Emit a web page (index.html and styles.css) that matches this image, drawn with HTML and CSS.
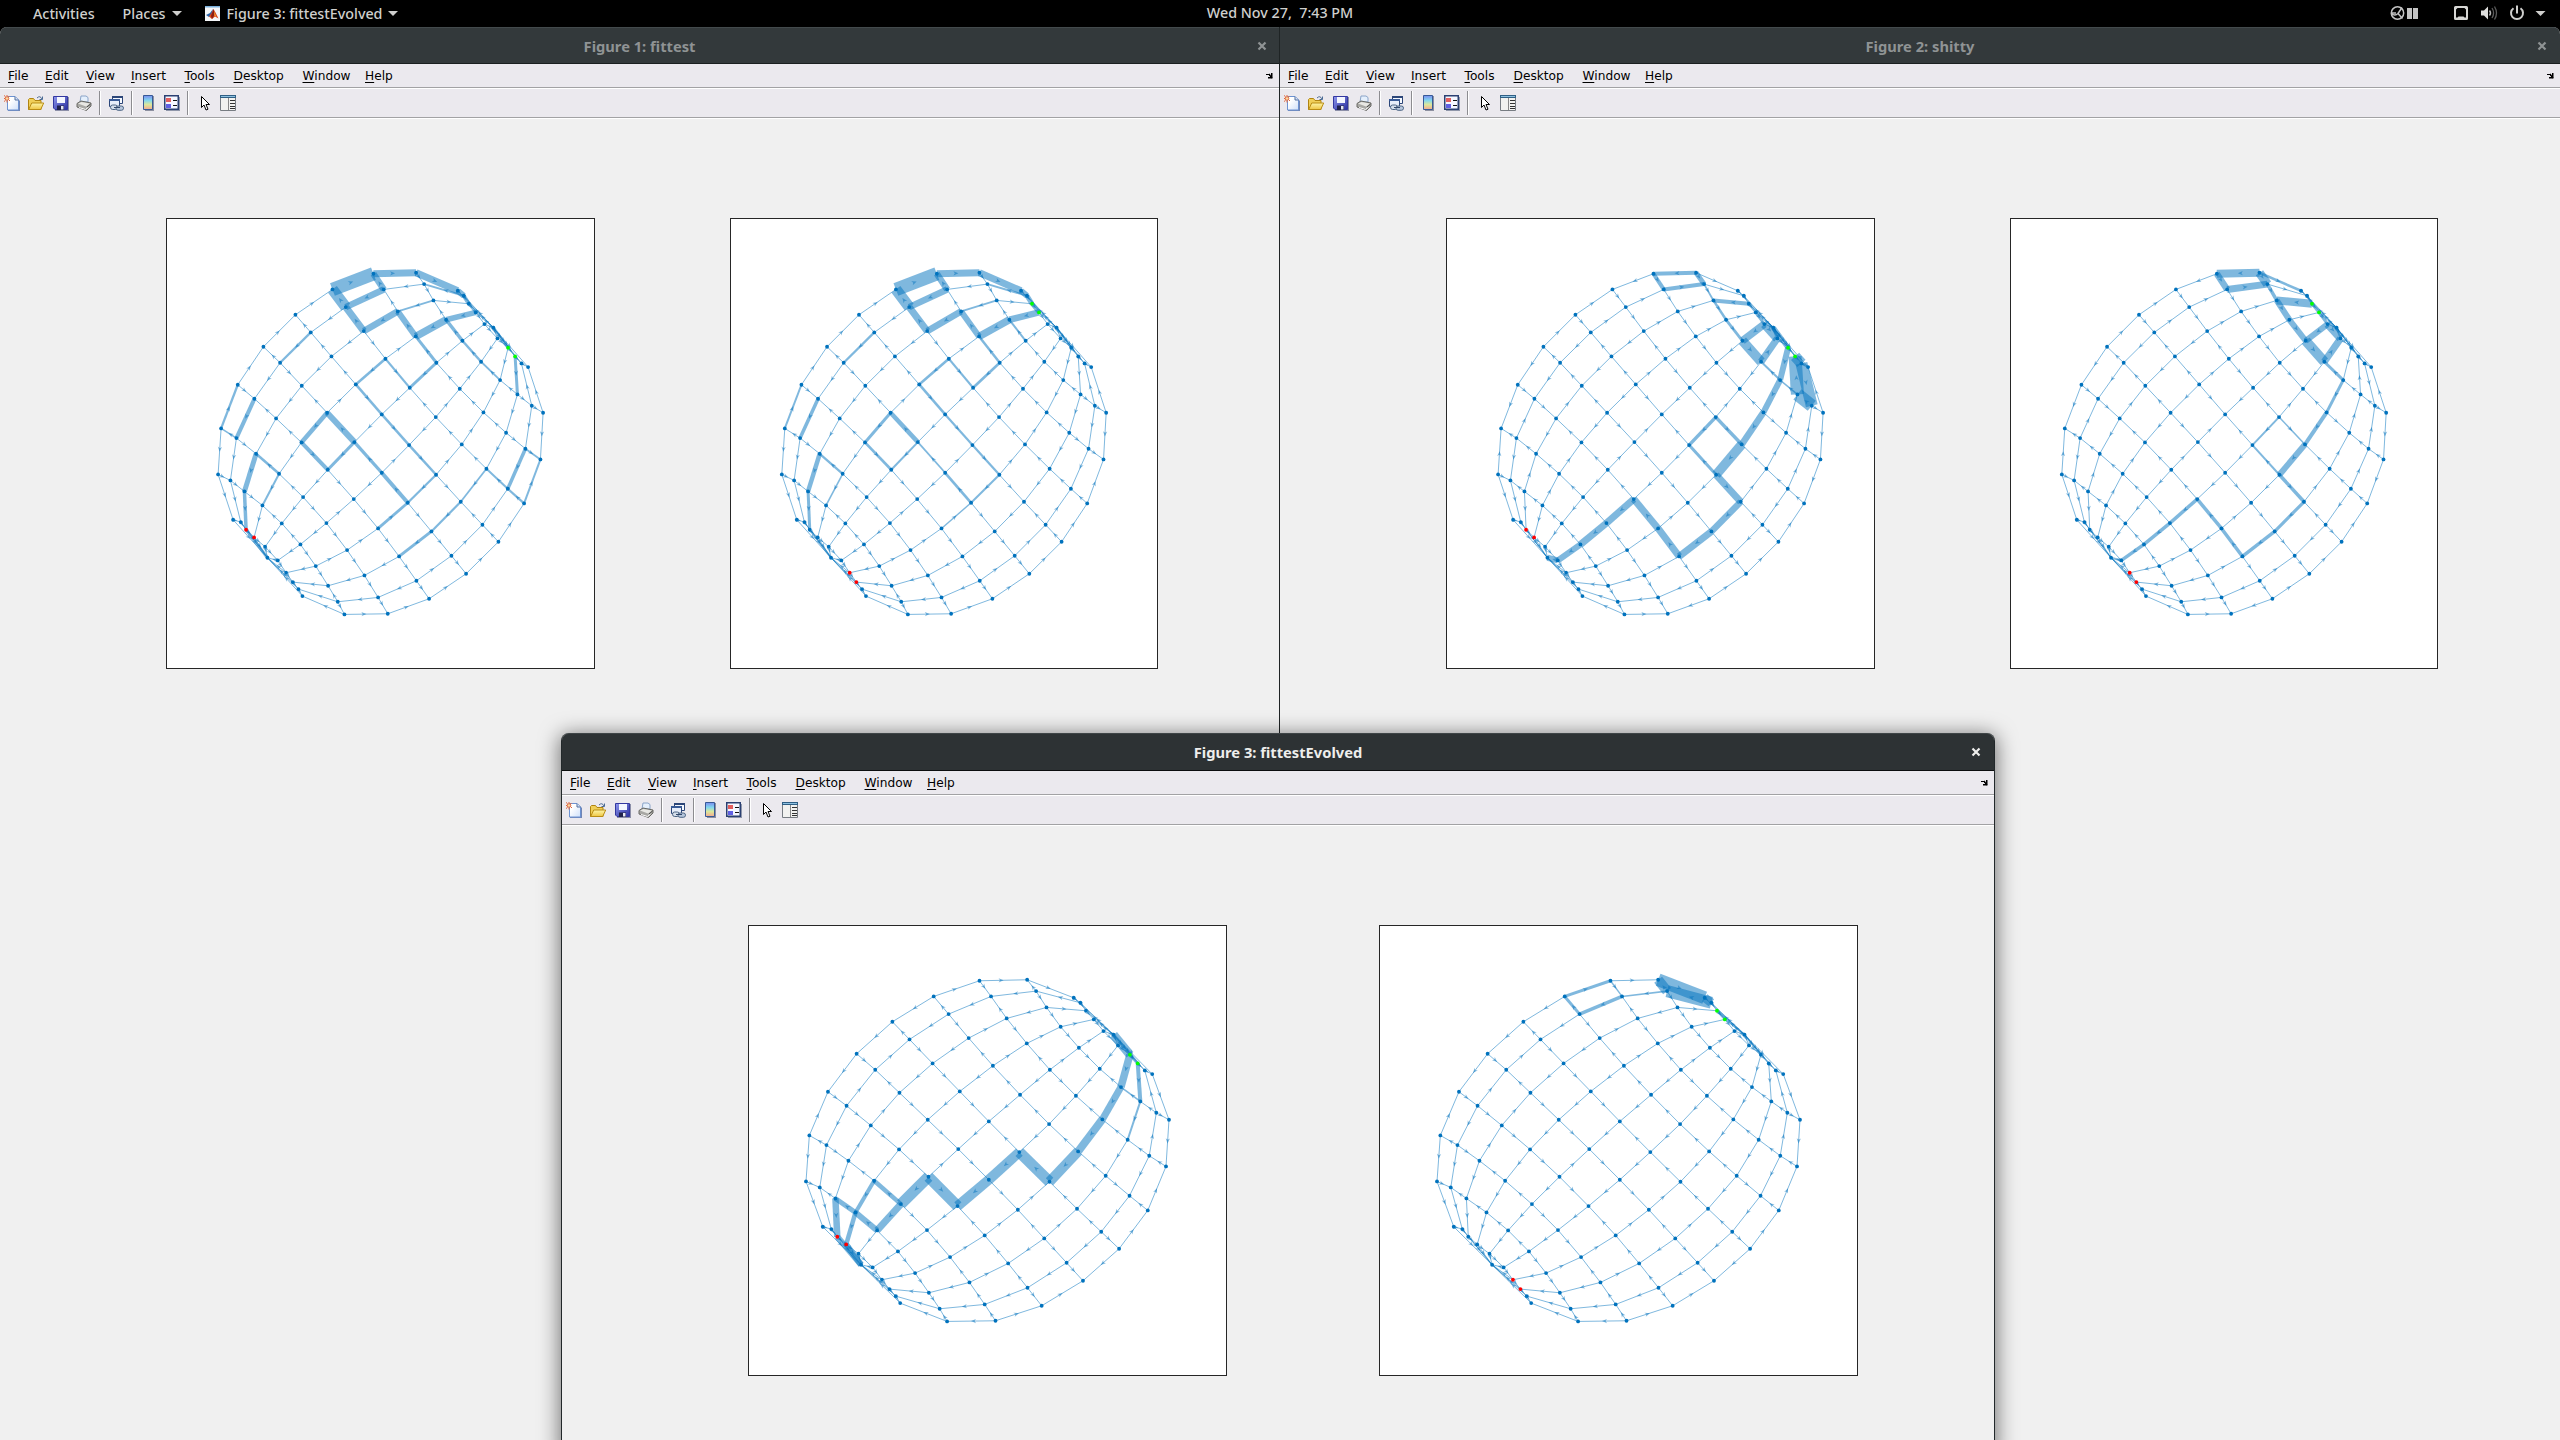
FILE: index.html
```html
<!DOCTYPE html>
<html lang="en">
<head>
<meta charset="utf-8">
<title>Figure 3: fittestEvolved</title>
<link rel="stylesheet" href="styles.css">
</head>
<body>
<svg class="defs" aria-hidden="true">
  <defs>
    <linearGradient id="g-page" x1="0" y1="0" x2="1" y2="1"><stop offset="0.3" stop-color="#fff"/><stop offset="1" stop-color="#cfe0fa"/></linearGradient>
    <linearGradient id="g-bar" x1="0" y1="0" x2="0" y2="1"><stop offset="0" stop-color="#7a8cf0"/><stop offset="0.35" stop-color="#82d8ee"/><stop offset="0.65" stop-color="#dce89a"/><stop offset="1" stop-color="#f2a890"/></linearGradient>
    <linearGradient id="g-disk" x1="0" y1="0" x2="1" y2="1"><stop offset="0" stop-color="#8f98ee"/><stop offset="1" stop-color="#2a2fa0"/></linearGradient>
    <linearGradient id="g-fold" x1="0" y1="0" x2="0" y2="1"><stop offset="0" stop-color="#fdf6a8"/><stop offset="1" stop-color="#eec544"/></linearGradient>
  </defs>
  <symbol id="i-new" viewBox="0 0 16 16">
    <path d="M4 2h8l4 4v10H4z" fill="#7286b4"/><path d="M3.500 1.500h7.500l3.500 3.500v10h-11z" fill="url(#g-page)" stroke="#6c92d2"/>
    <path d="M11 1.500v3.500h3.500" fill="#d5e2f7" stroke="#54719f"/>
    <path d="M0 .5l1.500 1M5.500 1l-1 1M0 6.500l1.500-1M3 6v1.500M3 0v1M0 3.500h1M5 5l1 1" stroke="#e0663c"/><circle cx="3" cy="3.500" r="1.800" fill="#fbd9a4" stroke="#e0663c"/>
  </symbol>
  <symbol id="i-open" viewBox="0 0 16 16">
    <path d="M9 3q3-3 5 1M14.500 1.500v3h-3" fill="none" stroke="#4c6c96"/>
    <path d="M.5 14.500v-10l1-1h4l1.500 2h6v9z" fill="#f0cf58" stroke="#b08412"/>
    <path d="M.7 14.500l3-6.500h12l-3 6.500z" fill="url(#g-fold)" stroke="#b98c14"/>
  </symbol>
  <symbol id="i-save" viewBox="0 0 16 16">
    <path d="M2 2h14v14H2z" fill="#8c8fa8"/><path d="M.5 1.500h14v13H2l-1.500-1.500z" fill="url(#g-disk)" stroke="#3338a0"/>
    <path d="M4 2h8v6H4z" fill="#f3f6ff"/><path d="M4 10.500h7V15H4z" fill="#20224c"/><path d="M8 11h2.500v3.500H8z" fill="#e6e8f4"/>
  </symbol>
  <symbol id="i-print" viewBox="0 0 16 16">
    <path d="M4 7l1-6h5l2 1.500L12 7z" fill="#e4effc" stroke="#8aa4c8"/>
    <path d="M1 8.500l4-2.500 10 2v3l-4.500 4.500-9.500-3.500z" fill="#a8a8a4" stroke="#6a6a66"/>
    <path d="M2 8.500l3.500-1.500 8.500 1.500-4 3z" fill="#e8e8e4"/><path d="M3 12.500l6.500 2 3-2.500" fill="none" stroke="#fff"/><path d="M11 12l3.500-3" stroke="#484846"/>
  </symbol>
  <symbol id="i-link" viewBox="0 0 16 16">
    <path d="M4.500 1.500h10v7h-10z" fill="#f6f9ff" stroke="#2c4678"/><path d="M4 1h11v2H4z" fill="#2c4678"/>
    <path d="M1.500 4.500h10v7h-10z" fill="#e6edfa" stroke="#2c4678"/><path d="M1 4h11v2H1z" fill="#385a96"/>
    <rect x="2.500" y="10" width="7" height="4.500" rx="2.200" fill="#d4deeb" stroke="#4c6484"/><rect x="8" y="11" width="7.500" height="4.300" rx="2.100" fill="#b6c6dc" stroke="#4c6484"/><path d="M6 12.500h6" stroke="#32486c"/>
  </symbol>
  <symbol id="i-colorbar" viewBox="0 0 16 16">
    <path d="M4 1h9v15H4z" fill="#8d90a0"/><path d="M2.500.5h9v14h-9z" fill="url(#g-bar)" stroke="#385a96"/>
  </symbol>
  <symbol id="i-legend" viewBox="0 0 16 16">
    <path d="M2 2h14v14H2z" fill="#8f96aa"/><path d="M.75.75h13.500v13.500H.75z" fill="#f5f7ff" stroke="#2b4072" stroke-width="1.500"/>
    <path d="M2 3h5v4H2z" fill="#e35e5e"/><path d="M2 9h5v4H2z" fill="#6060e4"/><path d="M9 5.500h4M9 10.500h4" stroke="#111"/>
  </symbol>
  <symbol id="i-cursor" viewBox="0 0 16 16">
    <path d="M4.500 1.500v11l2.500-2.500 2 5 2-.8-2-4.700h3.500z" fill="#fff" stroke="#000"/>
  </symbol>
  <symbol id="i-props" viewBox="0 0 16 16">
    <path d="M.5.5h15v15H.5z" fill="#f2f2f0" stroke="#777c82"/><path d="M0 0h16v3H0z" fill="#2f5f84"/><path d="M1 1h14v1H1z" fill="#8cc0e0"/>
    <path d="M8.500 3v12" stroke="#888"/><path d="M10 5.500h5M10 8.500h5M10 11.500h5M10 13.500h5" stroke="#333"/>
  </symbol>
  <symbol id="i-dock" viewBox="0 0 8 6"><path d="M0 1h3v1h1v1h1V0h1.500v5.500H2V4h2V3H3V2H0z" fill="#000"/><path d="M3 1l3 4" stroke="#000" stroke-width="1.300"/></symbol>
  <symbol id="i-close" viewBox="0 0 10 10"><path d="M1.500 1.500l7 7M8.500 1.500l-7 7" stroke="currentColor" stroke-width="2.200"/></symbol>
</svg>

<header class="topbar">
  <div class="topbar-left">
    <span class="activities">Activities</span>
    <span class="places">Places</span><i class="caret"></i>
    <svg class="app-icon" viewBox="0 0 15 15"><path d="M0 0h15v15H0z" fill="#f4f6f8"/><path d="M0 0h15v1.500H0z" fill="#7ab0dc"/><path d="M1 9l4-2 3-4-1 5-3 3z" fill="#2b64a8"/><path d="M4 10.500L6.500 7 8.500 3l2 3.500 3 6-3.500-2-3 2.500z" fill="#d8461c"/><path d="M8.500 3l1 6-2.500 4-1-3z" fill="#8c1d12"/><path d="M9 5l1.500 4 1 1.500-2-.5z" fill="#f6a430"/></svg>
    <span class="app-name">Figure 3: fittestEvolved</span><i class="caret"></i>
  </div>
  <div class="clock">Wed Nov 27,&nbsp; 7:43 PM</div>
  <svg class="status" viewBox="0 0 170 27">
    <g fill="none" stroke="#c4c4c4" stroke-width="1.500"><circle cx="7.500" cy="13" r="6.200"/><path d="M1 13.500q4 3 7 0M8 13.500l4-6M8 13.500l4.500 5M1 13h5" /></g>
    <path d="M17 8h5v11h-5zM23 8h5v11h-5z" fill="#c4c4c4"/>
    <path d="M65.500 6h11q1.500 0 1.500 1.500v11q0 1.500-1.500 1.500h-11q-1.500 0-1.500-1.500v-11Q64 6 65.500 6zm.5 3.500v8h1.500l1-1h5l1 1H76v-8L74.500 8h-7z" fill="#d6d6d4" fill-rule="evenodd"/>
    <path d="M91 10.500h3l4-4v13l-4-4h-3z" fill="#e0e0de"/><path d="M99.500 10.500q2 2.500 0 5" fill="none" stroke="#b4b4b4" stroke-width="1.500"/><path d="M102 8q3.200 5 0 10M104.500 6.500q4 6.500 0 13" fill="none" stroke="#5c5c5c" stroke-width="1.300"/>
    <path d="M123.500 8.200a6 6 0 1 0 7 0M127 5.500v8" fill="none" stroke="#cfcfcd" stroke-width="2"/>
    <path d="M145.500 11h10l-5 5z" fill="#cfcfcd"/>
  </svg>
</header>

<section class="window w1">
  <div class="titlebar"><span class="title">Figure 1: fittest</span><svg class="close"><use href="#i-close"/></svg></div>
  <nav class="menubar"><span><u>F</u>ile</span><span><u>E</u>dit</span><span><u>V</u>iew</span><span><u>I</u>nsert</span><span><u>T</u>ools</span><span><u>D</u>esktop</span><span><u>W</u>indow</span><span><u>H</u>elp</span><svg class="dock"><use href="#i-dock"/></svg></nav>
  <div class="toolbar"></div>
  <main class="canvas"><svg class="axes" data-plot="0"></svg><svg class="axes" data-plot="1"></svg></main>
</section>

<section class="window w2">
  <div class="titlebar"><span class="title">Figure 2: shitty</span><svg class="close"><use href="#i-close"/></svg></div>
  <nav class="menubar"><span><u>F</u>ile</span><span><u>E</u>dit</span><span><u>V</u>iew</span><span><u>I</u>nsert</span><span><u>T</u>ools</span><span><u>D</u>esktop</span><span><u>W</u>indow</span><span><u>H</u>elp</span><svg class="dock"><use href="#i-dock"/></svg></nav>
  <div class="toolbar"></div>
  <main class="canvas"><svg class="axes" data-plot="2"></svg><svg class="axes" data-plot="3"></svg></main>
</section>

<section class="window w3 active">
  <div class="titlebar"><span class="title">Figure 3: fittestEvolved</span><svg class="close"><use href="#i-close"/></svg></div>
  <nav class="menubar"><span><u>F</u>ile</span><span><u>E</u>dit</span><span><u>V</u>iew</span><span><u>I</u>nsert</span><span><u>T</u>ools</span><span><u>D</u>esktop</span><span><u>W</u>indow</span><span><u>H</u>elp</span><svg class="dock"><use href="#i-dock"/></svg></nav>
  <div class="toolbar"></div>
  <main class="canvas"><svg class="axes" data-plot="4"></svg><svg class="axes" data-plot="5"></svg></main>
</section>
<script src="graph.js"></script>
</body>
</html>
```
FILE: styles.css
```css
* { box-sizing: border-box; }
body { margin: 0; width: 2560px; height: 1440px; overflow: hidden; position: relative; background: #000; }
.defs { position: absolute; width: 0; height: 0; }

.topbar { height: 27px; background: #000; color: #cfcfcd; font: 500 14.3px/25px "Noto Sans", sans-serif; display: grid; grid-template-columns: 1fr auto 1fr; align-items: start; }
.topbar-left { display: flex; align-items: center; height: 26px; padding-left: 33px; }
.places { margin-left: 28px; }
.caret { border: 5px solid transparent; border-top-color: #cfcfcd; border-bottom: 0; margin-left: 6px; }
.app-icon { width: 15px; height: 15px; margin: 0 7px 0 23px; }
.clock { text-align: center; white-space: pre; }
.status { justify-self: end; width: 170px; height: 27px; }

.window { position: absolute; display: flex; flex-direction: column; background: #f0f0f0; }
.w1 { left: 0; top: 27px; width: 1280px; height: 1413px; border-right: 1px solid #1f2425; border-radius: 7px 0 0 0; overflow: hidden; }
.w2 { left: 1280px; top: 27px; width: 1280px; height: 1413px; border-radius: 0 7px 0 0; overflow: hidden; }
.w3 { left: 561px; top: 733px; width: 1434px; height: 720px; border: 1px solid #22282a; border-top: 0; border-radius: 8px 8px 0 0; box-shadow: 0 3px 20px 2px rgba(0, 0, 0, .5); }

.titlebar { flex: none; height: 37px; display: grid; grid-template-columns: 40px 1fr 40px; align-items: center; background: #33393b; border-top: 1px solid #434a4c; border-bottom: 1px solid #1a1f20; color: #8f9394; font: bold 14.7px/20px "Noto Sans", sans-serif; }
.active .titlebar { height: 38px; background: #2d3234; border-top-color: #3f4547; border-bottom-color: #0b0d0e; color: #eeeeec; border-radius: 7px 7px 0 0; }
.title { grid-column: 2; text-align: center; }
.close { width: 10px; height: 10px; margin-left: 17px; }
.w1 .close { margin-left: 18px; }

.menubar { flex: none; height: 24px; padding: 1px 0 0 8px; background: #ebe9ee; border-bottom: 1px solid #a2a2a4; display: grid; grid-template-columns: 37px 41px 45px 53.5px 49px 69px 62.500px 1fr 15px; align-items: center; color: #000; font: 12.2px/22px "DejaVu Sans", sans-serif; }
.menubar u { text-underline-offset: 2px; text-decoration-thickness: 1px; text-decoration-skip-ink: none; }
.dock { width: 8px; height: 6px; margin-left: 2px; }
.toolbar { flex: none; height: 30px; padding: 0 0 1px 4px; background: #ebe9ee; border-top: 1px solid #fff; border-bottom: 1px solid #a2a2a4; box-shadow: 0 1px #fff; display: flex; align-items: center; }
.tool { flex: none; width: 16px; height: 16px; }
.sep { width: 1px; height: 24px; background: #8c8c90; box-shadow: 1px 0 #fff; }

.canvas { flex: 1; display: flex; align-items: flex-start; background: #f0f0f0; margin-top: 1px; padding: 99px 0 0 166px; gap: 135px; }
.w3 .canvas { padding-left: 186px; gap: 152px; }
.axes { flex: none; width: 429px; height: 451px; background: #fff; box-shadow: inset 0 0 0 1px #262626; }
.axes:nth-child(2) { width: 428px; }
.w3 .axes { width: 479px; }

.edge { stroke: #0072bd; stroke-opacity: .5; fill: none; }
.arrow { fill: #0072bd; fill-opacity: .5; }
.node { fill: #0072bd; }
.source { fill: #00ff00; }
.sink { fill: #ff0000; }
```
FILE: graph.js
```js
// Toolbar: [icon, space after]; "|" is a separator.
const TOOLS = [["new", 8], ["open", 9], ["save", 7], ["print", 7], ["|", 8], ["link", 7], ["|", 9],
  ["colorbar", 7], ["legend", 7], ["|", 9], ["cursor", 7], ["props", 0]];
document.querySelectorAll(".toolbar").forEach(bar => {
  bar.innerHTML = TOOLS.map(([n, m]) => n === "|"
    ? `<i class="sep" style="margin-right:${m}px"></i>`
    : `<svg class="tool" style="margin-right:${m}px"><use href="#i-${n}"/></svg>`).join("");
});

// Ten strands of ten nodes, A to J, each running from the south cap to the north cap.
const STRANDS = {
  A: [219,929,174,793,183,655,233,524,310,410,406,314,517,238,640,191,768,188,893,242],
  B: [242,936,211,811,229,684,283,566,360,458,452,367,557,291,671,238,792,222,911,257],
  C: [258,959,253,844,288,731,348,625,425,527,514,439,611,363,713,304,820,271,926,281],
  D: [282,982,307,886,357,791,424,697,501,608,587,523,676,446,767,379,858,329,947,307],
  E: [315,1010,365,940,429,861,503,779,583,696,665,613,749,533,829,458,907,392,973,342],
  F: [353,1051,421,1003,499,939,581,867,665,788,747,705,827,621,899,536,963,455,1012,385],
  G: [378,1088,467,1068,561,1020,654,955,743,878,828,794,905,703,970,607,1020,510,1044,413],
  H: [398,1116,504,1127,613,1096,717,1039,814,964,902,875,979,776,1038,668,1072,553,1065,439],
  I: [415,1137,533,1175,654,1162,769,1112,874,1037,967,944,1043,836,1096,716,1115,587,1084,460],
  J: [427,1158,553,1213,683,1211,807,1166,918,1091,1015,995,1092,880,1141,748,1149,608,1104,471]
};
const NAMES = Object.keys(STRANDS);
const NODES = { S: [322, 1043], N: [1000, 353] };
NAMES.forEach(n => { for (let i = 0; i < 10; i++) NODES[n + i] = STRANDS[n].slice(2 * i, 2 * i + 2); });

// Flow direction along strands (">" = northward) and across them ("v" = towards J).
const FLOW = [
  { along: ["<<>>>>>>>","<<<<<<<<<","<<<<<<<<>","<<<<><><<","<<<<<<<>>","<<><><>><","<>>><>><<","<<<<<<<<<","<<<>>><<>","<>>>>>><>"],
    across: ["vvvvvvvvv","vvv^^vv^v","^v^^vvvvv","v^^vvvvvv","^v^^^^vvv","^^^vvvv^^","^^vv^^^^^","^^^^^^^vv","vv^^^^^vv","vvvvvvvvv"] },
  { along: ["<><<>><<>","<<><<>>>>","<><><<>><","<>><<>>>>","<<<>><<<<","<<<<<<><>","<><><<<<<","<<><<>>>>","<<<><<>><","<><>>><<>"],
    across: ["vvvvvvvvv","v^^^^^vvv","^^^^^^vvv","vv^^^^^vv","^^^vvvvvv","v^^v^^v^v","vv^v^v^^^","vvvvv^v^^","vvvvv^^^v","vvvvvvvvv"] },
  { along: ["<<><<<>>>","<<<>><<<<","<<>><<><>","<<<<<<>>>","<<<><<<>>","<<<<<<<<<","<>>>><<<<","<<><><<<<","<<<<<<<>>","<<>><>><<"],
    across: ["vvvvvvvvv","v^^^^vvv^","^v^^vv^^^","vvvvv^^^v","v^vvvv^vv","^vvv^^^^v","^v^^^^^v^","v^v^v^^^^","^vvvv^^^v","vvvvvvvvv"] }
];

// Widths of the heavier edges; all others are one pixel.
const WEIGHTS = [
  "A6A7 13.5,A7A8 7,A8A9 7,A6B6 11,B6C6 7,B6B7 6.5,A7B7 6.5,C6C7 6.5,C7D7 6,D7D8 7.5,D8D9 5.5,D7E7 3,D8E8 3.5,E8F8 2.5,F8G8 1.8,E6E7 3,D6E6 2,D5D6 2.5,D5E5 2.5,E5F5 2.5,F5G5 2.5,G4G5 2.2,F4G4 4,E4F4 3.3,D4E4 6,D3D4 4.5,D3E3 4,E3E4 3,G3G4 2.8,H3H4 3,H4H5 2.2,H5H6 1.8,B4B5 2.3,A2A3 2.3,B2B3 4,C1C2 5,C0C1 3.5,C2D2 2.5,D1D2 2,H8H9 3,I6I7 3.5,J6J7 2,H6I6 2,I6J6 2.2,B8B9 2,C7C8 1.8,A9B9 6,B9C9 4,C9D9 2.5,A2B2 1.6,I7J7 1.8,NG9 3,C0S 3",
  "A6A7 13.5,A7A8 7,A8A9 7,A6B6 11,B6C6 7,B6B7 6.5,A7B7 6.5,C6C7 6.5,C7D7 6,D7D8 7.5,D8D9 6.5,D7E7 2.5,D8E8 2,E6E7 2.6,D6E6 2,D5D6 2.5,D5E5 2.5,E5F5 2.2,F5G5 2.2,G4G5 2,F4G4 2.7,E4F4 1.8,D4E4 4.5,D3D4 3,D3E3 2.7,E3E4 2,G3G4 1.4,B4B5 2.3,A2A3 2,B2B3 3.5,C1C2 4.5,C0C1 3,C2D2 2.3,D1D2 1.6,B8B9 2,C7C8 1.8,A9B9 6,B9C9 5,C9D9 4,NG9 2,C0S 2",
  "A7A8 4,A7B7 4,B7B8 4,A8B8 5,B8C8 1.8,C8C9 4,C8D8 2.5,D8E8 2.8,E8F8 9.5,E8E9 7.5,E9F9 9,F8F9 7,F8G8 2,G8H8 1.5,G8G9 6,G7G8 6,G6G7 6.5,G5G6 9.5,F6G6 3.5,F5F6 3.5,F5G5 3,G5H5 7,H4H5 6.5,H3H4 7,G3H3 7,F3G3 7,F2F3 7,F1F2 7,F0F1 6,F0S 6,H8H9 13,H8I8 13,I8I9 12,H9I9 11,NG9 5,C9D9 2,D9E9 3,NF9 3,I9J9 2",
  "A7A8 8,A7B7 6.5,B7B8 7,A8B8 9,A8A9 2.5,B8C8 3.5,C8C9 8,C8D8 6,D8E8 6,E8F8 10,E8E9 6,E9F9 8,F8F9 7,F8G8 3,G7G8 3,G6G7 4,G5G6 6,F5F6 2,F6G6 1.5,F5G5 2,G5H5 3.5,H4H5 3.2,H3H4 3.5,G3H3 3.5,F3G3 3.5,F2F3 3.5,F1F2 3.5,F0F1 3.5,F0S 2,D9E9 3,C9D9 3,B9C9 2,NF9 2",
  "G8G9 7.5,G7G8 7,G6G7 8,G5G6 10,F5G5 11,F4F5 10,F3F4 10,E3F3 11,E2E3 11,E1E2 7,D1E1 6,C1D1 5,C0C1 6.5,D2E2 4.5,D1D2 4,D0D1 4.5,H8H9 4,H7H8 2,G8H8 1.6,NG9 9,NH9 3,D0S 6,C0S 6",
  "A8A9 13,A8B8 10,B8B9 12,A9B9 9,A6A7 3,A6B6 3,B6B7 3.5,B7B8 1.6,A7B7 1.4,C9D9 2,NC9 2,NG9 2"
];

document.querySelectorAll(".axes").forEach(svg => {
  const k = +svg.dataset.plot;
  const [x0, sx] = k > 3 ? [58, .3723] : k % 2 ? [51.8, .3327] : [52.1, 1 / 3];
  const at = id => [x0 + (NODES[id][0] - 174) * sx, NODES[id][1] / 3 - 7.9];
  const width = {};
  WEIGHTS[k].split(",").forEach(s => { const [e, w] = s.split(" "); width[e] = +w; });
  const flow = FLOW[k >> 1];
  let edges = "", arrows = "";
  const link = (a, b, reverse) => {
    const w = width[a + b] || 1;
    const p = at(a), q = at(b);
    edges += `<path class="edge" stroke-width="${w}" d="M${p}L${q}"/>`;
    const angle = Math.atan2(q[1] - p[1], q[0] - p[0]) * 180 / Math.PI + (reverse ? 180 : 0);
    arrows += `<path class="arrow" transform="translate(${(p[0] + q[0]) / 2} ${(p[1] + q[1]) / 2}) rotate(${angle})" d="M.3 0L-4.700 2.100L-3.300 0L-4.700-2.100Z"/>`;
  };
  NAMES.forEach((n, s) => {
    for (let i = 0; i < 9; i++) link(n + i, n + (i + 1), flow.along[s][i] === "<");
    if (s < 9) for (let i = 0; i < 10; i++) link(n + i, NAMES[s + 1] + i, flow.across[i][s] === "^");
    link(n + 0, "S", false);
    link("N", n + 9, false);
  });
  const sources = k % 2 ? ["C9", "D9"] : ["G9", "H9"];
  const sinks = k % 2 ? ["G0", "H0"] : ["C0", "D0"];
  const dots = Object.keys(NODES).map(id => {
    const [x, y] = at(id);
    const kind = sources.includes(id) ? " source" : sinks.includes(id) ? " sink" : "";
    return `<circle class="node${kind}" cx="${x}" cy="${y}" r="1.900"/>`;
  }).join("");
  svg.innerHTML = edges + arrows + dots;
});
```
